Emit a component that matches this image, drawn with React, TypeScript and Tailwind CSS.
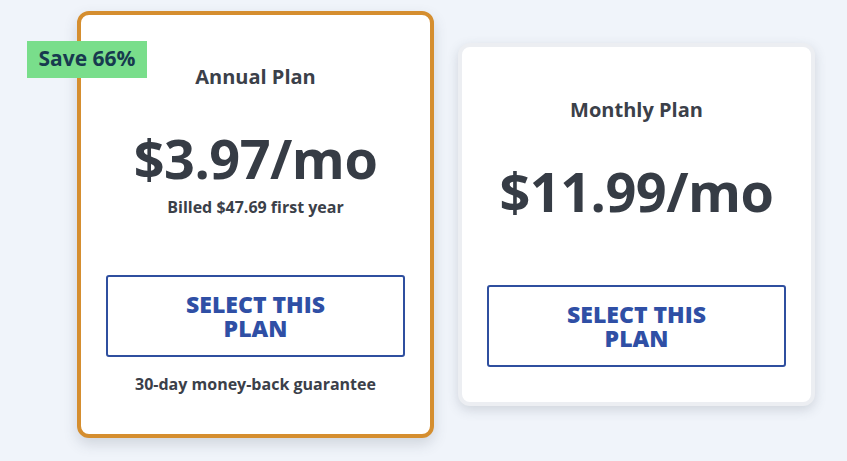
import React from 'react';

type Plan = {
  name: string;
  price: string;
  billed?: string;
  guarantee?: string;
  badge?: string;
  featured?: boolean;
};

const plans: Plan[] = [
  {
    name: 'Annual Plan',
    price: '$3.97/mo',
    billed: 'Billed $47.69 first year',
    guarantee: '30-day money-back guarantee',
    badge: 'Save 66%',
    featured: true,
  },
  { name: 'Monthly Plan', price: '$11.99/mo' },
];

function PlanCard({ plan }: { plan: Plan }) {
  return (
    <div
      className={
        plan.featured
          ? 'relative w-[357px] rounded-[12px] border-4 border-[#d58e2f] bg-white px-[25px] pt-12 pb-[39px] shadow-[0_6px_14px_rgba(60,70,90,0.18)]'
          : 'relative w-[357px] rounded-[12px] border-4 border-[#eceef2] bg-white px-[25px] pt-[49px] pb-[35px] shadow-[0_4px_12px_rgba(60,70,90,0.18)]'
      }
    >
      {plan.badge && (
        <div className="absolute -left-[54px] top-[26px] flex h-[37px] w-[120px] items-center justify-center bg-[#79de8b] text-[21px] font-bold text-[#173a4f]">
          {plan.badge}
        </div>
      )}
      <h3 className="text-center text-[20px] leading-[28px] font-bold text-[#3b4049]">{plan.name}</h3>
      <div className="mt-[35px] text-center text-[54px] leading-[64px] font-bold tracking-[-0.5px] text-[#363c45]">
        {plan.price}
      </div>
      {plan.billed && (
        <div className="mt-[6px] text-center text-[16px] leading-[22px] font-bold text-[#3b4049]">{plan.billed}</div>
      )}
      <button
        className={
          (plan.billed ? 'mt-[57px] ' : 'mt-[62px] ') +
          'flex w-full flex-col items-center justify-center rounded-[3px] border-2 border-[#2f4f9f] bg-white py-[15px] text-[23px] leading-[24px] font-extrabold text-[#2f4fa5]'
        }
      >
        <span className="block">SELECT THIS</span>
        <span className="block">PLAN</span>
      </button>
      {plan.guarantee && (
        <div className="mt-4 text-center text-[16px] leading-[22px] font-bold text-[#3b4049]">{plan.guarantee}</div>
      )}
    </div>
  );
}

export default function App() {
  return (
    <div
      className="flex h-[461px] w-[847px] items-center gap-6 bg-[#f0f4fa] pl-[77px] pb-[13px]"
      style={{ fontFamily: '"Open Sans", "Noto Sans", sans-serif' }}
    >
      {plans.map((p) => (
        <PlanCard key={p.name} plan={p} />
      ))}
    </div>
  );
}
